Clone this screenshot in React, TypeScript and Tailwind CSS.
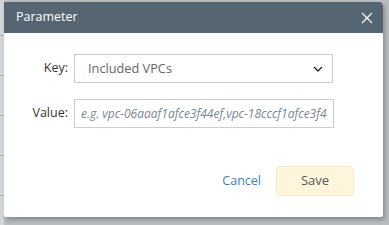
import React from "react";

export default function App() {
  return (
    <div
      className="relative w-[389px] h-[225px] overflow-hidden bg-[#b9bdc0]"
      style={{ fontFamily: '"Open Sans", "Noto Sans", sans-serif' }}
    >
      {/* background page strip */}
      <div className="absolute left-0 top-0 w-[4px] h-[225px] bg-[#d3d6d8] flex flex-col">
        <div className="h-[36px] border-b border-[#aeb2b5]" />
        <div className="h-[40px] border-b border-[#aeb2b5]" />
        <div className="h-[40px] border-b border-[#aeb2b5]" />
        <div className="h-[40px] border-b border-[#aeb2b5]" />
        <div className="h-[40px] border-b border-[#aeb2b5]" />
      </div>
      <div className="absolute left-[4px] top-[2px] w-[379px] h-[215px] bg-white rounded-tr-[4px] rounded-b-[2px] shadow-[2px_3px_4px_rgba(0,0,0,0.25)] flex flex-col">
        <div className="h-[31px] bg-[#556672] rounded-tr-[4px] flex items-center justify-between pl-[12px] pr-[10px]">
          <span className="text-white text-[12.5px]">Parameter</span>
          <svg width="12" height="12" viewBox="0 0 12 12">
            <path d="M1 1 L11 11 M11 1 L1 11" stroke="#ffffff" strokeWidth="1.3" />
          </svg>
        </div>
        <div className="flex flex-col gap-[16px] pt-[21px]">
          <div className="flex items-center">
            <div className="w-[64px] text-right text-[12.5px] text-[#333]">Key:</div>
            <div className="ml-[6px] w-[259px] h-[29px] border border-[#cccccc] flex items-center justify-between pl-[13px] pr-[9px]">
              <span className="text-[12.75px] text-[#666]">Included VPCs</span>
              <svg width="10" height="6" viewBox="0 0 10 6">
                <path d="M1 1 L5 5 L9 1" stroke="#222" strokeWidth="1.3" fill="none" />
              </svg>
            </div>
          </div>
          <div className="flex items-center">
            <div className="w-[64px] text-right text-[12.5px] text-[#333]">Value:</div>
            <div className="ml-[6px] w-[260px] h-[29px] border border-[#cccccc] flex items-center pl-[6px] overflow-hidden whitespace-nowrap">
              <span className="text-[12px] italic text-[#7a8790]">e.g. vpc-06aaaf1afce3f44ef,vpc-18cccf1afce3f4</span>
            </div>
          </div>
        </div>
        <div className="flex-1" />
        <div className="flex items-center justify-end pr-[29px] pb-[21px]">
          <span className="text-[12.5px] text-[#3a7fbf] mr-[15px]">Cancel</span>
          <div className="w-[78px] h-[30px] rounded-[4px] bg-[#fff5dc] border border-[#fbeac0] flex items-center justify-center text-[13px] text-[#555]">
            Save
          </div>
        </div>
      </div>
    </div>
  );
}
